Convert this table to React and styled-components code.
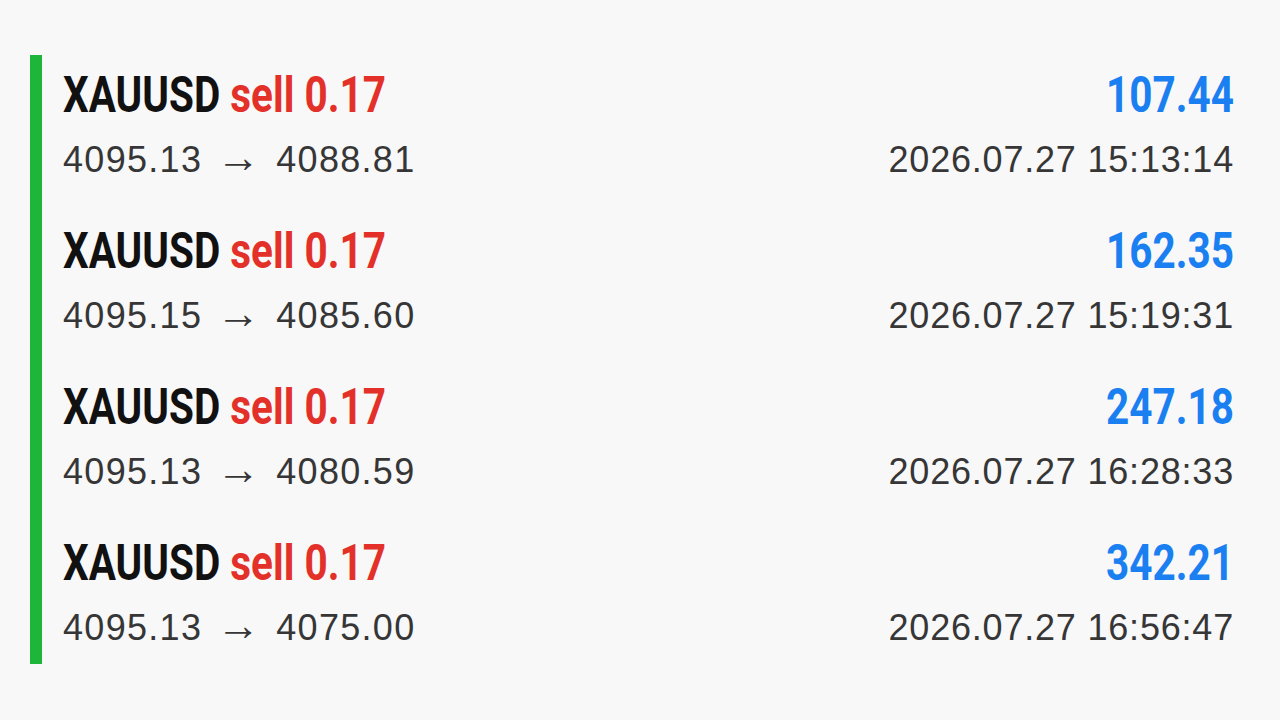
import React from 'react';
import styled, { createGlobalStyle } from 'styled-components';

const GlobalStyle = createGlobalStyle`
  body {
    margin: 0;
    background: #f8f8f8;
  }
`;

const trades = [
  { symbol: 'XAUUSD', side: 'sell', lots: '0.17', open: '4095.13', close: '4088.81', profit: '107.44', time: '2026.07.27 15:13:14' },
  { symbol: 'XAUUSD', side: 'sell', lots: '0.17', open: '4095.15', close: '4085.60', profit: '162.35', time: '2026.07.27 15:19:31' },
  { symbol: 'XAUUSD', side: 'sell', lots: '0.17', open: '4095.13', close: '4080.59', profit: '247.18', time: '2026.07.27 16:28:33' },
  { symbol: 'XAUUSD', side: 'sell', lots: '0.17', open: '4095.13', close: '4075.00', profit: '342.21', time: '2026.07.27 16:56:47' },
];

const Page = styled.div`
  padding: 55px 46px 0 30px;
`;

const List = styled.div`
  border-left: 12px solid #1db53a;
  padding: 10px 0 14px 21px;
  display: flex;
  flex-direction: column;
  gap: 39px;
`;

const Row = styled.div`
  display: flex;
  flex-direction: column;
  gap: 13px;
`;

const Line = styled.div`
  display: flex;
  justify-content: space-between;
  align-items: baseline;
`;

// condensed look: no condensed face installed, so squeeze Roboto Bold
const Title = styled.div`
  font-family: Roboto, "DejaVu Sans Condensed", sans-serif;
  font-weight: 700;
  font-size: 50px;
  line-height: 60px;
  color: #111;
  white-space: nowrap;
  transform: scaleX(0.81);
  transform-origin: left center;
`;

const Side = styled.span`
  color: #e3312a;
`;

const Profit = styled.div`
  font-family: Roboto, "DejaVu Sans Condensed", sans-serif;
  font-weight: 700;
  font-size: 50px;
  line-height: 60px;
  color: ${(p) => (p.loss ? '#e3312a' : '#1a7ff0')};
  white-space: nowrap;
  transform: scaleX(0.81);
  transform-origin: right center;
`;

const Detail = styled.div`
  font-family: "Liberation Sans", Arial, sans-serif;
  font-size: 36px;
  line-height: 44px;
  height: 44px;
  letter-spacing: ${(p) => p.spacing || 1}px;
  color: #363636;
  white-space: nowrap;
`;

const Arrow = styled.span`
  font-family: "Liberation Sans", Arial, sans-serif;
  font-size: 44px;
  line-height: 0;
  letter-spacing: 0;
  margin: 0 16px 0 14px;
`;

export default function App() {
  return (
    <>
      <GlobalStyle />
      <Page>
        <List>
          {trades.map((t, i) => (
            <Row key={i}>
              <Line>
                <Title>
                  {t.symbol} <Side>{t.side} {t.lots}</Side>
                </Title>
                <Profit>{t.profit}</Profit>
              </Line>
              <Line>
                <Detail spacing={1.3}>
                  {t.open}<Arrow>→</Arrow>{t.close}
                </Detail>
                <Detail spacing={0.8}>{t.time}</Detail>
              </Line>
            </Row>
          ))}
        </List>
      </Page>
    </>
  );
}
